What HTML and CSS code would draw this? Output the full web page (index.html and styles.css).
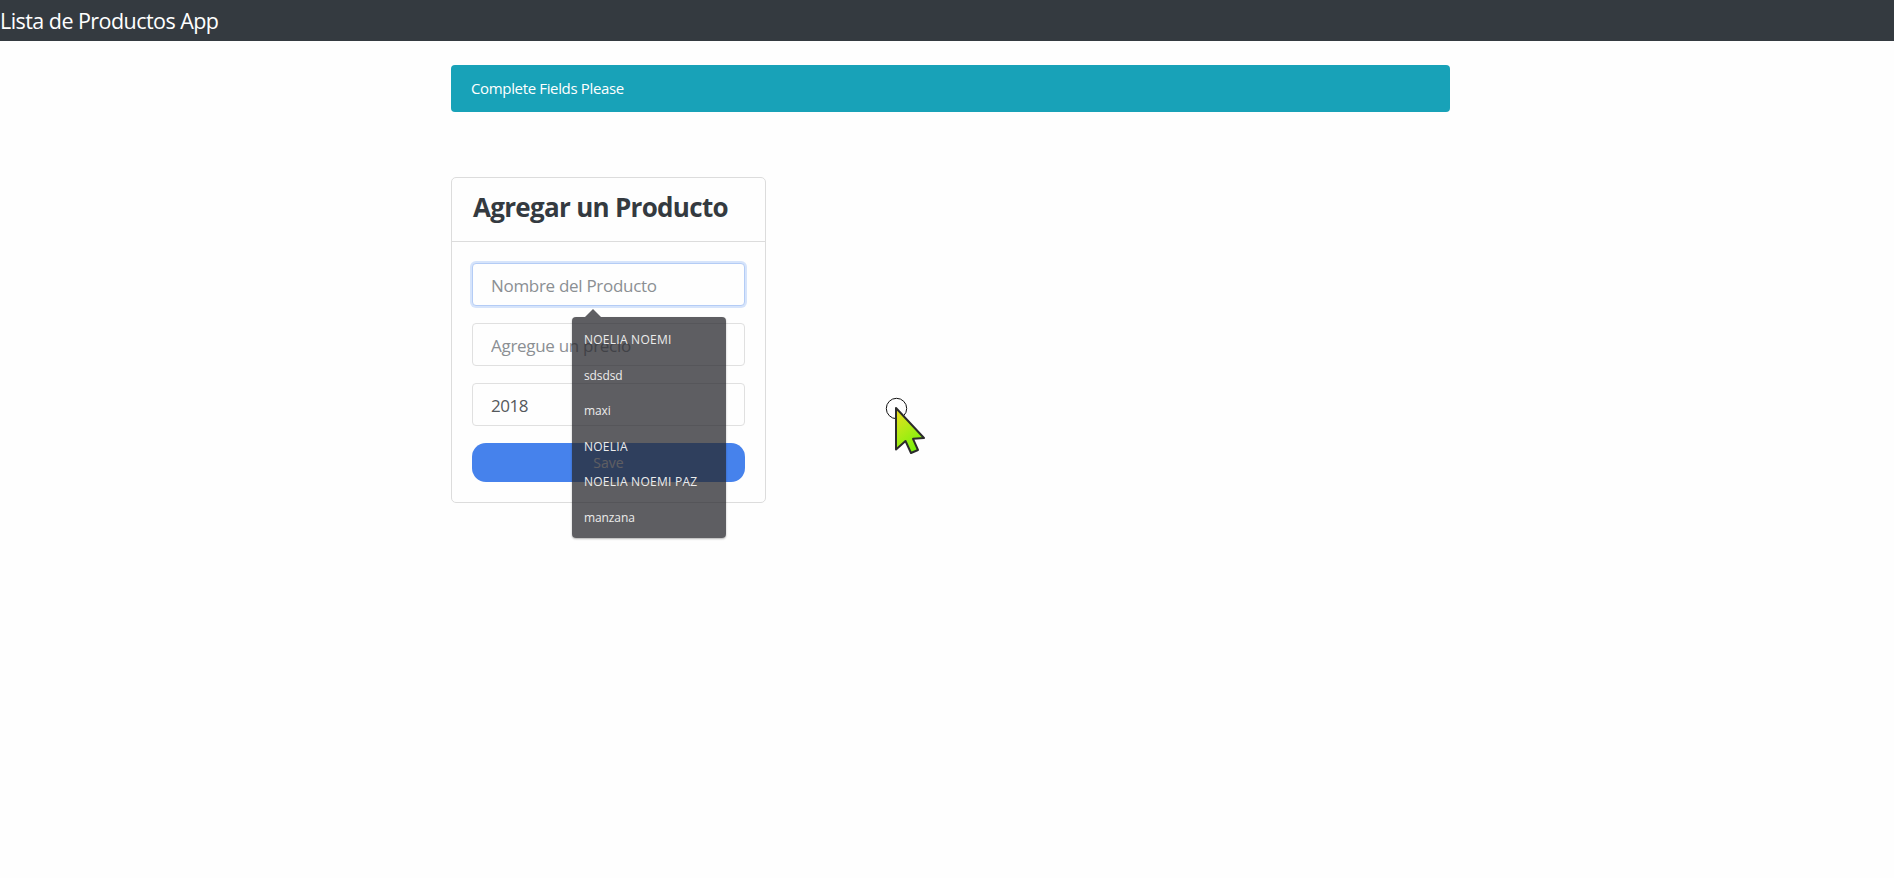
FILE: index.html
```html
<!DOCTYPE html>
<html lang="es">
<head>
<meta charset="utf-8">
<title>Lista de Productos App</title>
<link rel="stylesheet" href="styles.css">
</head>
<body>
<nav class="navbar"><a class="brand">Lista de Productos App</a></nav>
<main class="container">
  <div class="alert"><span>Complete Fields Please</span></div>
  <section class="card">
    <header class="card-header"><h1>Agregar un Producto</h1></header>
    <form class="card-body">
      <div class="field">
        <input class="control active" type="text" placeholder="Nombre del Producto">
        <ul class="suggestions">
          <li class="caps">NOELIA NOEMI</li>
          <li>sdsdsd</li>
          <li>maxi</li>
          <li class="caps">NOELIA</li>
          <li class="caps">NOELIA NOEMI PAZ</li>
          <li>manzana</li>
        </ul>
      </div>
      <input class="control" type="text" placeholder="Agregue un precio">
      <input class="control year" type="text" value="2018">
      <button class="save" type="button">Save</button>
    </form>
  </section>
</main>
<svg class="pointer" viewBox="0 0 44 62" width="44" height="62">
  <defs><linearGradient id="lime" x1="0" y1="0" x2=".5" y2="1"><stop offset="0" stop-color="#f0dc20"/><stop offset=".5" stop-color="#b4ea16"/><stop offset="1" stop-color="#7cf00c"/></linearGradient></defs>
  <circle cx="11.5" cy="13.5" r="10.2" fill="none" stroke="#111" stroke-width="1"/>
  <path d="M11 13V54.5L20.500 46L26 58L33 55L28 43.800L39 43Z" fill="url(#lime)" stroke="#2b2b2b" stroke-width="2" stroke-linejoin="round"/>
</svg>
</body>
</html>
```
FILE: styles.css
```css
* { box-sizing: border-box; }
body {
  margin: 0;
  min-height: 878px;
  background: #fefefe;
  color: #343a40;
  font-family: "Segoe UI", "Open Sans", sans-serif;
  font-size: 17px;
}
.navbar { height: 41px; background: #343a40; display: flex; align-items: center; }
.brand { color: #fff; font-size: 21.5px; line-height: 30px; letter-spacing: -0.55px; white-space: nowrap; }
.container { width: 999px; margin: 24px 0 0 451px; }
.alert {
  height: 47px;
  padding: 0 20px 2px;
  display: flex;
  align-items: center;
  border-radius: 4px;
  background: #18a2b8;
  color: #fff;
  font-size: 15px;
  letter-spacing: -0.35px;
}
.card { width: 315px; height: 326px; margin-top: 65px; border: 1px solid #dcdcdc; border-radius: 5px; }
.card-header { height: 64px; padding: 9px 20px 0 21px; border-bottom: 1px solid #dcdcdc; }
h1 { margin: 0; font-size: 26px; line-height: 40px; font-weight: 700; letter-spacing: -0.7px; white-space: nowrap; }
.card-body { display: flex; flex-direction: column; gap: 17px; padding: 21px 20px; }
.field { position: relative; height: 43px; }
.control {
  display: block;
  width: 273px;
  height: 43px;
  padding: 1px 18px 0;
  border: 1px solid #e0e0e0;
  border-radius: 4px;
  outline: 0;
  background: #fefefe;
  color: #55595c;
  font: 17px "Segoe UI", "Open Sans", sans-serif;
  letter-spacing: -0.3px;
}
.control::placeholder { color: #8b8f93; opacity: 1; }
.year { letter-spacing: -0.5px; }
.active { border-color: #b4ccf5; box-shadow: 0 0 0 2px #d6e4fb; }
.save {
  width: 273px;
  height: 39px;
  padding: 0;
  border: 0;
  border-radius: 14px;
  background: #4682ec;
  color: #fff;
  font: 14px "Segoe UI", "Open Sans", sans-serif;
}
.suggestions {
  position: absolute;
  z-index: 2;
  left: 100px;
  top: 54px;
  width: 154px;
  height: 221px;
  margin: 0;
  padding: 5px 12px;
  list-style: none;
  border-radius: 4px;
  background: rgba(40, 40, 45, .75);
  box-shadow: 0 1px 2px rgba(0, 0, 0, .3);
  color: #ececec;
  font-size: 12px;
}
.suggestions::before {
  content: "";
  position: absolute;
  left: 13px;
  top: -8px;
  border: 8px solid transparent;
  border-top: 0;
  border-bottom-color: rgba(40, 40, 45, .75);
}
.suggestions li { height: 35.5px; line-height: 35.5px; letter-spacing: -0.1px; white-space: nowrap; }
.suggestions .caps { letter-spacing: 0.25px; }
.pointer { position: absolute; left: 885px; top: 395px; }
```
